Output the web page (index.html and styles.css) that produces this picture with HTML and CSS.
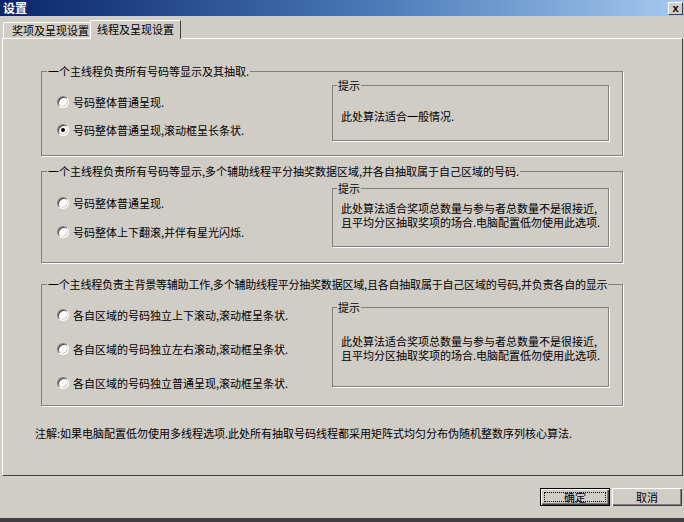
FILE: index.html
```html
<!DOCTYPE html>
<html lang="zh-CN">
<head>
    <meta charset="UTF-8">
    <title>设置</title>
    <link rel="stylesheet" href="styles.css">
</head>
<body>
    <div class="window">
        <div class="titlebar">
            <span class="title">设置</span>
            <span class="close">x</span>
        </div>

        <div class="tabs">
            <div class="tab">奖项及呈现设置</div>
            <div class="tab active">线程及呈现设置</div>
        </div>

        <div class="panel">
            <fieldset class="group g1">
                <legend>一个主线程负责所有号码等显示及其抽取.</legend>
                <div class="group-body">
                    <div class="options">
                        <div class="option"><span class="radio"></span>号码整体普通呈现.</div>
                        <div class="option"><span class="radio checked"></span>号码整体普通呈现,滚动框呈长条状.</div>
                    </div>
                    <fieldset class="hint">
                        <legend>提示</legend>
                        <p>此处算法适合一般情况.</p>
                    </fieldset>
                </div>
            </fieldset>

            <fieldset class="group g2">
                <legend>一个主线程负责所有号码等显示,多个辅助线程平分抽奖数据区域,并各自抽取属于自己区域的号码.</legend>
                <div class="group-body">
                    <div class="options">
                        <div class="option"><span class="radio"></span>号码整体普通呈现.</div>
                        <div class="option"><span class="radio"></span>号码整体上下翻滚,并伴有星光闪烁.</div>
                    </div>
                    <fieldset class="hint">
                        <legend>提示</legend>
                        <p>此处算法适合奖项总数量与参与者总数量不是很接近,<br>且平均分区抽取奖项的场合.电脑配置低勿使用此选项.</p>
                    </fieldset>
                </div>
            </fieldset>

            <fieldset class="group g3">
                <legend>一个主线程负责主背景等辅助工作,多个辅助线程平分抽奖数据区域,且各自抽取属于自己区域的号码,并负责各自的显示</legend>
                <div class="group-body">
                    <div class="options">
                        <div class="option"><span class="radio"></span>各自区域的号码独立上下滚动,滚动框呈条状.</div>
                        <div class="option"><span class="radio"></span>各自区域的号码独立左右滚动,滚动框呈条状.</div>
                        <div class="option"><span class="radio"></span>各自区域的号码独立普通呈现,滚动框呈条状.</div>
                    </div>
                    <fieldset class="hint">
                        <legend>提示</legend>
                        <p>此处算法适合奖项总数量与参与者总数量不是很接近,<br>且平均分区抽取奖项的场合.电脑配置低勿使用此选项.</p>
                    </fieldset>
                </div>
            </fieldset>

            <p class="note">注解:如果电脑配置低勿使用多线程选项.此处所有抽取号码线程都采用矩阵式均匀分布伪随机整数序列核心算法.</p>
        </div>

        <div class="buttons">
            <button class="btn default">确定</button>
            <button class="btn">取消</button>
        </div>
    </div>
</body>
</html>
```

FILE: styles.css
```css
* {
    margin: 0;
    padding: 0;
    box-sizing: border-box;
}

body {
    font-family: "Noto Sans CJK SC", "Liberation Sans", sans-serif;
    font-size: 11px;
    color: #000;
    background: #d0ccc6;
}

.window {
    width: 684px;
    height: 522px;
    overflow: hidden;
    display: flex;
    flex-direction: column;
    background: #d0ccc6;
    border-bottom: 4px solid #404040;
}

/* title bar */
.titlebar {
    height: 16px;
    flex: none;
    display: flex;
    align-items: center;
    justify-content: space-between;
    padding: 0 1px 0 3px;
    background: linear-gradient(90deg, #0a246a, #4a7ab8 55%, #a6caf0);
}

.title {
    color: #fff;
    font-weight: bold;
    font-size: 12px;
    line-height: 16px;
}

.close {
    width: 15px;
    height: 13px;
    background: #d0ccc6;
    border: 1px solid;
    border-color: #fff #404040 #404040 #fff;
    font-family: "Liberation Sans", sans-serif;
    font-weight: bold;
    font-size: 11px;
    line-height: 10px;
    text-align: center;
}

/* tabs */
.tabs {
    height: 22px;
    flex: none;
    display: flex;
    align-items: flex-end;
    padding-left: 3px;
}

.tab {
    height: 16px;
    width: 87px;
    padding-left: 8px;
    line-height: 15px;
    border-top: 1px solid #fff;
    border-left: 1px solid #fff;
    border-radius: 2px 0 0 0;
}

.tab.active {
    height: 19px;
    width: 91px;
    margin-bottom: -1px;
    padding-left: 6px;
    line-height: 17px;
    border-right: 1px solid #404040;
    background: #d0ccc6;
    position: relative;
    z-index: 1;
}

/* tab page */
.panel {
    height: 438px;
    flex: none;
    margin: 0 1px 0 2px;
    padding: 25px 0 0 38px;
    border: 1px solid;
    border-color: #fff #404040 #404040 #fff;
}

.group {
    width: 582px;
    border: 1px solid #808080;
    box-shadow: 1px 1px 0 #fff;
}

.group > legend {
    margin-left: 5px;
    padding: 0 1px;
    line-height: 14px;
    white-space: nowrap;
}

.g3 > legend {
    letter-spacing: -0.2px;
}

.group-body {
    display: flex;
    align-items: flex-start;
}

.options {
    flex: 1;
    display: flex;
    flex-direction: column;
    padding-left: 15px;
}

.option {
    height: 16px;
    display: flex;
    align-items: center;
    gap: 4px;
    white-space: nowrap;
}

.radio {
    width: 12px;
    height: 12px;
    flex: none;
    border-radius: 50%;
    background: #fff;
    border: 1px solid;
    border-color: #808080 #fff #fff #808080;
    box-shadow: inset 1px 1px 0 #404040, inset -1px -1px 0 #d0ccc6;
    position: relative;
}

.radio.checked::after {
    content: '';
    position: absolute;
    left: 3px;
    top: 3px;
    width: 4px;
    height: 4px;
    border-radius: 50%;
    background: #000;
}

.hint {
    width: 277px;
    flex: none;
    margin-right: 13px;
    border: 1px solid #808080;
    box-shadow: 1px 1px 0 #fff;
}

.hint legend {
    margin-left: 4px;
    padding: 0 1px;
    line-height: 14px;
}

.hint p {
    padding-left: 8px;
    line-height: 14px;
    white-space: nowrap;
}

.g1 {
    padding-bottom: 14px;
}

.g1 .options {
    padding-top: 16px;
    gap: 12px;
}

.g1 .hint {
    height: 63px;
}

.g1 .hint p {
    padding-top: 17px;
}

.g2 {
    margin-top: 8px;
    padding-bottom: 15px;
}

.g2 .options {
    padding-top: 17px;
    gap: 13px;
}

.g2 .hint {
    margin-top: 3px;
    height: 66px;
}

.g2 .hint p {
    padding-top: 6px;
}

.g3 {
    margin-top: 14px;
    padding-bottom: 14px;
}

.g3 .options {
    padding-top: 16px;
    gap: 18px;
}

.g3 .hint {
    margin-top: 9px;
    height: 87px;
}

.g3 .hint p {
    padding-top: 20px;
}

.note {
    margin: 20px 0 0 -6px;
    line-height: 14px;
    white-space: nowrap;
}

/* bottom buttons */
.buttons {
    flex: 1;
    display: flex;
    justify-content: flex-end;
    align-items: flex-start;
    gap: 2px;
    padding: 12px 2px 0 0;
}

.btn {
    width: 70px;
    height: 18px;
    font-family: inherit;
    font-size: 11px;
    line-height: 16px;
    color: #000;
    background: #d0ccc6;
    border: none;
    box-shadow: inset 1px 1px 0 #fff, inset -1px -1px 0 #404040, inset -2px -2px 0 #808080;
    position: relative;
}

.btn.default {
    border: 1px solid #000;
}

.btn.default::after {
    content: '';
    position: absolute;
    left: 3px;
    top: 3px;
    right: 3px;
    bottom: 3px;
    border: 1px dotted #000;
}
```
